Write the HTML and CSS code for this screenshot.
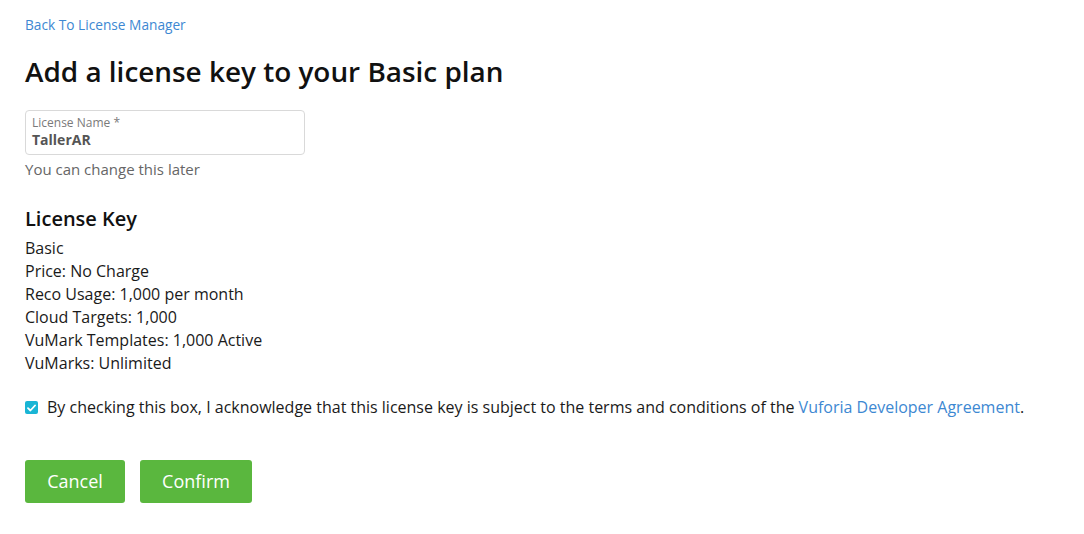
FILE: index.html
```html
<!DOCTYPE html>
<html>
<head>
<meta charset="utf-8">
<link rel="stylesheet" href="styles.css">
</head>
<body>
<main class="page">
  <a class="back" href="#">Back To License Manager</a>
  <h1 class="title">Add a license key to your Basic plan</h1>
  <div class="field">
    <label class="field-label">License Name *</label>
    <div class="field-value">TallerAR</div>
  </div>
  <div class="hint">You can change this later</div>
  <h2 class="subtitle">License Key</h2>
  <ul class="details">
    <li>Basic</li>
    <li>Price: No Charge</li>
    <li>Reco Usage: 1,000 per month</li>
    <li>Cloud Targets: 1,000</li>
    <li>VuMark Templates: 1,000 Active</li>
    <li>VuMarks: Unlimited</li>
  </ul>
  <div class="agree">
    <span class="check"><svg width="9" height="8" viewBox="0 0 9 8"><path d="M1 4.2 L3.4 6.5 L8 1.5" fill="none" stroke="#fff" stroke-width="1.8" stroke-linecap="round" stroke-linejoin="round"/></svg></span>
    <span>By checking this box, I acknowledge that this license key is subject to the terms and conditions of the <a class="link" href="#">Vuforia Developer Agreement</a>.</span>
  </div>
  <div class="actions">
    <button class="btn btn-cancel">Cancel</button>
    <button class="btn btn-confirm">Confirm</button>
  </div>
</main>
</body>
</html>
```
FILE: styles.css
```css
html, body {
  margin: 0;
  padding: 0;
  background: #fff;
}
body {
  font-family: "Open Sans", "Liberation Sans", sans-serif;
  color: #1a1a1a;
}
.page {
  padding: 15px 25px;
  display: flex;
  flex-direction: column;
  align-items: flex-start;
}
.back {
  font-size: 13.7px;
  line-height: 20px;
  color: #3d88d2;
  text-decoration: none;
}
.title {
  margin: 17px 0 0;
  font-size: 27.9px;
  line-height: 38px;
  font-weight: 600;
  color: #111;
}
.field {
  margin-top: 20px;
  box-sizing: border-box;
  width: 280px;
  height: 45px;
  border: 1px solid #d9d9d9;
  border-radius: 4px;
  padding: 4px 6px 0;
  display: flex;
  flex-direction: column;
}
.field-label {
  font-size: 12px;
  line-height: 16px;
  color: #7a7a7a;
}
.field-value {
  font-size: 14px;
  line-height: 18px;
  font-weight: 700;
  color: #555;
}
.hint {
  margin-top: 4px;
  font-size: 15px;
  line-height: 20px;
  color: #666;
}
.subtitle {
  margin: 27px 0 0;
  font-size: 20px;
  line-height: 26px;
  font-weight: 600;
  color: #111;
}
.details {
  list-style: none;
  margin: 5px 0 0;
  padding: 0;
  font-size: 16px;
  line-height: 23px;
  color: #1a1a1a;
}
.agree {
  margin-top: 21px;
  display: flex;
  align-items: center;
  gap: 9px;
  font-size: 16px;
  line-height: 23px;
  color: #1a1a1a;
}
.check {
  width: 13px;
  height: 13px;
  border-radius: 2px;
  background: #19b5d5;
  display: flex;
  align-items: center;
  justify-content: center;
  flex: none;
}
.link {
  color: #3d88d2;
  text-decoration: none;
}
.actions {
  margin-top: 41px;
  display: flex;
  gap: 15px;
}
.btn {
  height: 43px;
  border: none;
  border-radius: 3px;
  background: #5ab73e;
  color: #fff;
  font-family: "Open Sans", "Liberation Sans", sans-serif;
  font-size: 18px;
  padding: 0 0 2px;
}
.btn-cancel { width: 100px; }
.btn-confirm { width: 112px; }
```
